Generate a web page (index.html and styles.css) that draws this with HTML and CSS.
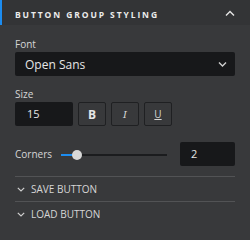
FILE: index.html
```html
<!DOCTYPE html>
<html lang="en">
<head>
    <meta charset="UTF-8">
    <title>Button Group Styling</title>
    <link rel="stylesheet" href="styles.css">
</head>
<body>
    <div class="panel">
        <div class="panel-head">
            <span class="panel-title">Button Group Styling</span>
            <svg class="chev" width="10" height="6" viewBox="0 0 10 6"><path d="M1 5.5 L5 1.5 L9 5.5" fill="none" stroke="#e6e6e6" stroke-width="1.4"/></svg>
        </div>

        <div class="panel-body">
            <label class="field-label">Font</label>
            <div class="select">
                <span>Open Sans</span>
                <svg width="9" height="6" viewBox="0 0 9 6"><path d="M1 1.5 L4.5 5 L8 1.5" fill="none" stroke="#cfcfcf" stroke-width="1.4"/></svg>
            </div>

            <label class="field-label size-label">Size</label>
            <div class="size-row">
                <div class="input size-input">15</div>
                <button class="style-btn bold">B</button>
                <button class="style-btn italic">I</button>
                <button class="style-btn under">U</button>
            </div>

            <div class="corners-row">
                <span class="corners-label">Corners</span>
                <div class="slider">
                    <div class="slider-fill"></div>
                    <div class="slider-thumb"></div>
                </div>
                <div class="input corners-input">2</div>
            </div>

            <div class="sub-sections">
                <div class="sub-section">
                    <svg width="8" height="5" viewBox="0 0 8 5"><path d="M0.8 0.8 L4 4 L7.2 0.8" fill="none" stroke="#cfcfcf" stroke-width="1.2"/></svg>
                    <span>Save Button</span>
                </div>
                <div class="sub-section">
                    <svg width="8" height="5" viewBox="0 0 8 5"><path d="M0.8 0.8 L4 4 L7.2 0.8" fill="none" stroke="#cfcfcf" stroke-width="1.2"/></svg>
                    <span>Load Button</span>
                </div>
            </div>
        </div>
    </div>
</body>
</html>
```

FILE: styles.css
```css
* {
    margin: 0;
    padding: 0;
    box-sizing: border-box;
    font-family: 'Open Sans', sans-serif;
}

body {
    background: #38393b;
    width: 250px;
    height: 240px;
    overflow: hidden;
}

.panel {
    width: 250px;
    min-height: 240px;
    background: #38393b;
}

.panel-head {
    height: 25px;
    display: flex;
    align-items: center;
    justify-content: space-between;
    padding: 3px 15px 0 15px;
    border-left: 2px solid #1c8cf0;
    background: #333436;
}

.panel-title {
    margin-left: -2px;
    color: #ececec;
    font-size: 8.5px;
    font-weight: 700;
    letter-spacing: 1.9px;
    text-transform: uppercase;
}

.chev {
    margin-top: -2px;
}

.panel-body {
    padding: 12px 15px 0 15px;
}

.field-label {
    display: block;
    color: #d6d6d6;
    font-size: 10px;
    line-height: 14px;
    margin-bottom: 1px;
}

.select {
    height: 24px;
    background: #17181a;
    border-radius: 2px;
    display: flex;
    align-items: center;
    justify-content: space-between;
    padding: 0 8px 0 10px;
    color: #e6e6e6;
    font-size: 12px;
}

.size-label {
    margin-top: 11px;
}

.size-row {
    display: flex;
    gap: 5px;
}

.input {
    height: 24px;
    background: #17181a;
    border-radius: 2px;
    color: #e6e6e6;
    font-size: 11px;
    line-height: 24px;
    padding-left: 12px;
}

.size-input {
    width: 58px;
}

.style-btn {
    width: 28px;
    height: 24px;
    background: transparent;
    border: 1px solid #1f2022;
    border-radius: 2px;
    color: #e6e6e6;
    font-size: 11px;
}

.style-btn.bold {
    font-weight: 700;
    font-size: 12px;
}

.style-btn.italic {
    font-family: 'DejaVu Serif', serif;
    font-style: italic;
    font-size: 10px;
    color: #d6d6d6;
}

.style-btn.under {
    text-decoration: underline;
    font-size: 10px;
    color: #d6d6d6;
}

.corners-row {
    display: flex;
    align-items: center;
    margin-top: 16px;
    height: 24px;
}

.corners-label {
    color: #d6d6d6;
    font-size: 10px;
    width: 46px;
}

.slider {
    position: relative;
    width: 106px;
    height: 2px;
    background: #1b1c1e;
    margin-top: 2px;
}

.slider-fill {
    width: 16px;
    height: 2px;
    background: #1c8cf0;
}

.slider-thumb {
    position: absolute;
    left: 11px;
    top: -4px;
    width: 10px;
    height: 10px;
    border-radius: 50%;
    background: #d8d8d8;
}

.corners-input {
    width: 55px;
    margin-left: auto;
    padding-left: 11px;
}

.sub-sections {
    margin-top: 10px;
}

.sub-section {
    height: 25px;
    border-top: 1px solid #525355;
    display: flex;
    align-items: center;
    gap: 6px;
    padding-left: 2px;
    color: #d6d6d6;
    font-size: 10px;
    text-transform: uppercase;
}
```
